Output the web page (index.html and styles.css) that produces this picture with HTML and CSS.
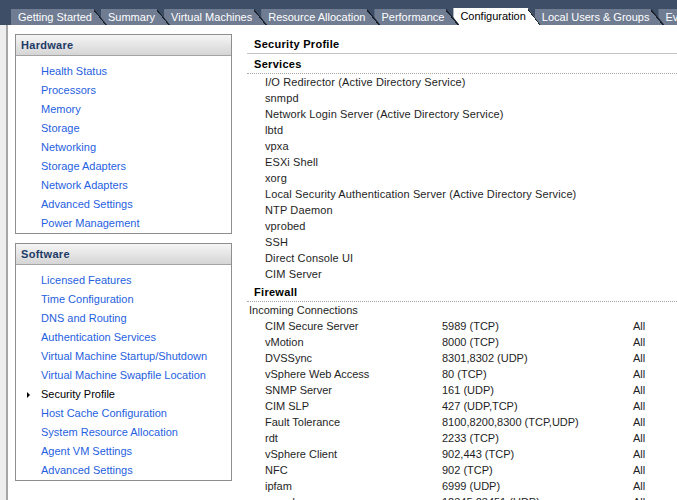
FILE: index.html
```html
<!DOCTYPE html>
<html>
<head>
<meta charset="utf-8">
<title>Configuration - Security Profile</title>
<link rel="stylesheet" href="styles.css">
</head>
<body>
<div class="tabbar">
  <div class="tab">Getting Started</div>
  <div class="tab">Summary</div>
  <div class="tab">Virtual Machines</div>
  <div class="tab">Resource Allocation</div>
  <div class="tab">Performance</div>
  <div class="tab active">Configuration</div>
  <div class="tab">Local Users &amp; Groups</div>
  <div class="tab">Events</div>
</div>
<div class="main">
  <div class="sidebar">
    <div class="box">
      <div class="box-head">Hardware</div>
      <ul class="links">
        <li><a>Health Status</a></li>
        <li><a>Processors</a></li>
        <li><a>Memory</a></li>
        <li><a>Storage</a></li>
        <li><a>Networking</a></li>
        <li><a>Storage Adapters</a></li>
        <li><a>Network Adapters</a></li>
        <li><a>Advanced Settings</a></li>
        <li><a>Power Management</a></li>
      </ul>
    </div>
    <div class="box">
      <div class="box-head">Software</div>
      <ul class="links">
        <li><a>Licensed Features</a></li>
        <li><a>Time Configuration</a></li>
        <li><a>DNS and Routing</a></li>
        <li><a>Authentication Services</a></li>
        <li><a>Virtual Machine Startup/Shutdown</a></li>
        <li><a>Virtual Machine Swapfile Location</a></li>
        <li class="current">Security Profile</li>
        <li><a>Host Cache Configuration</a></li>
        <li><a>System Resource Allocation</a></li>
        <li><a>Agent VM Settings</a></li>
        <li><a>Advanced Settings</a></li>
      </ul>
    </div>
  </div>
  <div class="detail">
    <div class="title">Security Profile</div>
    <div class="section">Services</div>
    <ul class="services">
      <li>I/O Redirector (Active Directory Service)</li>
      <li>snmpd</li>
      <li>Network Login Server (Active Directory Service)</li>
      <li>lbtd</li>
      <li>vpxa</li>
      <li>ESXi Shell</li>
      <li>xorg</li>
      <li>Local Security Authentication Server (Active Directory Service)</li>
      <li>NTP Daemon</li>
      <li>vprobed</li>
      <li>SSH</li>
      <li>Direct Console UI</li>
      <li>CIM Server</li>
    </ul>
    <div class="section">Firewall</div>
    <div class="subhead">Incoming Connections</div>
    <div class="fw">
      <div class="fw-row"><span>CIM Secure Server</span><span>5989 (TCP)</span><span>All</span></div>
      <div class="fw-row"><span>vMotion</span><span>8000 (TCP)</span><span>All</span></div>
      <div class="fw-row"><span>DVSSync</span><span>8301,8302 (UDP)</span><span>All</span></div>
      <div class="fw-row"><span>vSphere Web Access</span><span>80 (TCP)</span><span>All</span></div>
      <div class="fw-row"><span>SNMP Server</span><span>161 (UDP)</span><span>All</span></div>
      <div class="fw-row"><span>CIM SLP</span><span>427 (UDP,TCP)</span><span>All</span></div>
      <div class="fw-row"><span>Fault Tolerance</span><span>8100,8200,8300 (TCP,UDP)</span><span>All</span></div>
      <div class="fw-row"><span>rdt</span><span>2233 (TCP)</span><span>All</span></div>
      <div class="fw-row"><span>vSphere Client</span><span>902,443 (TCP)</span><span>All</span></div>
      <div class="fw-row"><span>NFC</span><span>902 (TCP)</span><span>All</span></div>
      <div class="fw-row"><span>ipfam</span><span>6999 (UDP)</span><span>All</span></div>
      <div class="fw-row"><span>cmmds</span><span>12345,23451 (UDP)</span><span>All</span></div>
    </div>
  </div>
</div>
</body>
</html>
```
FILE: styles.css
```css
html, body {
  margin: 0;
  padding: 0;
  height: 500px;
  overflow: hidden;
  background: #ffffff;
}
body {
  font-family: "Liberation Sans", Arial, sans-serif;
  font-size: 11px;
  color: #1e1e1e;
}

/* ---------- tabs ---------- */
.tabbar {
  box-sizing: border-box;
  height: 25px;
  background: #3d4e66;
  display: flex;
  align-items: flex-end;
  padding-left: 11px;
  white-space: nowrap;
  overflow: hidden;
}
.tab {
  position: relative;
  flex: none;
  height: 16px;
  line-height: 16px;
  padding: 0 15px 0 7px;
  margin-right: -6px;
  background: #6f7c92;
  color: #ffffff;
  clip-path: polygon(0 0, calc(100% - 13px) 0, 100% 100%, 0 100%);
}
.tab::after {
  content: "";
  position: absolute;
  right: 0;
  top: 0;
  width: 13px;
  height: 100%;
  background: linear-gradient(to top right, transparent calc(50% - 1.2px), #18202c calc(50% - 1.2px));
}
.tab:nth-child(1) { z-index: 8; }
.tab:nth-child(2) { z-index: 7; }
.tab:nth-child(3) { z-index: 6; }
.tab:nth-child(4) { z-index: 5; }
.tab:nth-child(5) { z-index: 4; }
.tab:nth-child(6) { z-index: 3; }
.tab:nth-child(7) { z-index: 2; }
.tab:nth-child(8) { z-index: 1; }
.tab.active {
  height: 17px;
  background: #ffffff;
  color: #000000;
}

/* ---------- main area ---------- */
.main {
  display: flex;
  align-items: flex-start;
  border-left: 6px solid #eeeeee;
  box-shadow: inset 2px 0 0 #a6a6a6;
}
.sidebar {
  flex: none;
  width: 217px;
  margin: 9px 0 0 9px;
  display: flex;
  flex-direction: column;
  gap: 9px;
}
.box {
  border: 1px solid #8e8e8e;
  background: #ffffff;
}
.box-head {
  height: 20px;
  line-height: 20px;
  padding-left: 5px;
  font-weight: bold;
  letter-spacing: 0.3px;
  color: #1d3a66;
  background: linear-gradient(#f5f5f5, #d5d5d5);
  border-bottom: 1px solid #a4a4a4;
}
.links {
  list-style: none;
  margin: 0;
  padding: 6px 0 0 25px;
}
.links li {
  height: 19px;
  line-height: 19px;
}
.links a {
  color: #1f5fe0;
}
.links .current {
  position: relative;
  color: #000000;
}
.links .current::before {
  content: "";
  position: absolute;
  left: -14px;
  top: 7px;
  border-left: 3px solid #000000;
  border-top: 3px solid transparent;
  border-bottom: 3px solid transparent;
}

/* ---------- detail ---------- */
.detail {
  flex: 1;
  margin-left: 15px;
  padding-top: 11px;
}
.title {
  padding: 0 0 1px 7px;
  line-height: 16px;
  font-weight: bold;
  letter-spacing: 0.3px;
  color: #000000;
  border-bottom: 1px solid #c4c4c4;
}
.section {
  margin-top: 2px;
  padding: 0 0 1px 7px;
  line-height: 16px;
  font-weight: bold;
  letter-spacing: 0.3px;
  color: #000000;
  border-bottom: 1px dotted #a8a8a8;
}
.services {
  list-style: none;
  margin: 0;
  padding: 0 0 0 18px;
  letter-spacing: 0.12px;
}
.services li {
  line-height: 16px;
}
.subhead {
  padding-left: 2px;
  line-height: 16px;
}
.fw-row {
  display: grid;
  grid-template-columns: 177px 191px auto;
  padding-left: 18px;
  line-height: 16px;
}
```
